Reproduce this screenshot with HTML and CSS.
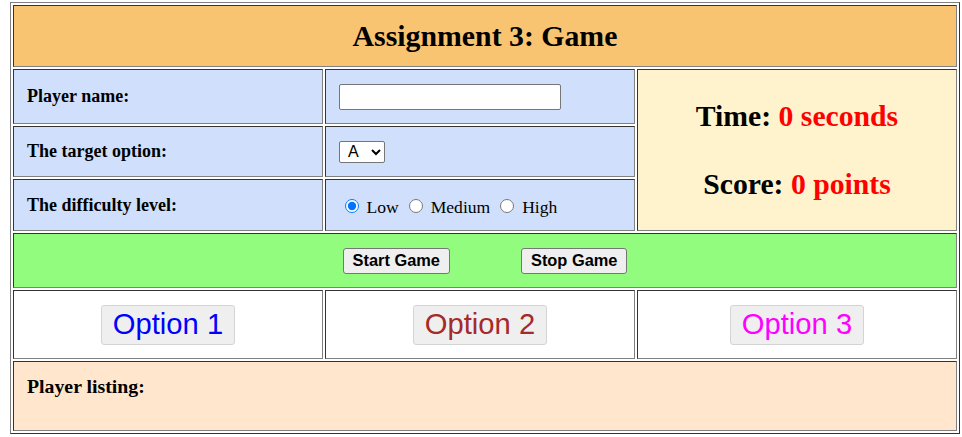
FILE: index.html
```html
<!DOCTYPE html>
<html lang="en">
<head>
<meta charset="utf-8">
<title>Assignment 3: Game</title>
<link rel="stylesheet" href="styles.css">
</head>
<body>
<div class="game">
  <div class="cell title">Assignment 3: Game</div>

  <div class="cell label">Player name:</div>
  <div class="cell field"><input class="name-input" type="text"></div>
  <div class="cell status">
    <div class="stat">Time: <span class="val">0 seconds</span></div>
    <div class="stat">Score: <span class="val">0 points</span></div>
  </div>

  <div class="cell label">The target option:</div>
  <div class="cell field">
    <select class="target">
      <option>A</option>
      <option>B</option>
      <option>C</option>
    </select>
  </div>

  <div class="cell label">The difficulty level:</div>
  <div class="cell field">
    <div class="levels"><input class="radio" type="radio" name="level" checked> Low <input class="radio" type="radio" name="level"> Medium <input class="radio" type="radio" name="level"> High</div>
  </div>

  <div class="cell controls">
    <button class="ctl">Start Game</button>
    <button class="ctl">Stop Game</button>
  </div>

  <div class="cell opt"><button class="option o1">Option 1</button></div>
  <div class="cell opt"><button class="option o2">Option 2</button></div>
  <div class="cell opt"><button class="option o3">Option 3</button></div>

  <div class="cell listing">Player listing:</div>
</div>
</body>
</html>
```

FILE: styles.css
```css
* {
  box-sizing: border-box;
}

body {
  margin: 0;
  background: #ffffff;
  font-family: "Liberation Serif", "Times New Roman", serif;
  font-size: 17.6px;
  color: #000000;
}

.game {
  margin: 2px 0 0 10px;
  width: 950px;
  display: grid;
  grid-template-columns: 310px 310px 320px;
  grid-template-rows: 62px 55px 51px 52px 55px 69px 70px;
  gap: 2px;
  padding: 2px;
  border: 1px solid;
  border-color: #808080 #333333 #333333 #808080;
}

.cell {
  border: 1px solid;
  border-color: #333333 #808080 #808080 #333333;
}

.title {
  grid-column: 1 / span 3;
  background: #f8c471;
  display: flex;
  align-items: center;
  justify-content: center;
  font-weight: bold;
  font-size: 29.8px;
}

.label {
  background: #d0e0fc;
  display: flex;
  align-items: center;
  padding-left: 13px;
  font-weight: bold;
  font-size: 18px;
}

.field {
  background: #d0e0fc;
  display: flex;
  align-items: center;
  padding-left: 13px;
}

.name-input {
  width: 222px;
  height: 26px;
  border: 1px solid #767676;
  border-radius: 2px;
  background: #ffffff;
  padding: 1px 3px;
  font: 16px "Liberation Sans", Arial, sans-serif;
}

.target {
  width: 46px;
  height: 22px;
  border: 1px solid #767676;
  border-radius: 2px;
  background: #ffffff;
  color: #000000;
  padding: 0 0 0 4px;
  font: 16px "Liberation Sans", Arial, sans-serif;
}

.levels {
  padding-top: 3px;
}

.radio {
  width: 14.3px;
  height: 14.3px;
  margin: 3.3px 3.3px 0 5.5px;
  vertical-align: baseline;
}

.status {
  grid-column: 3;
  grid-row: 2 / span 3;
  background: #fff3cd;
  display: flex;
  flex-direction: column;
  align-items: center;
  justify-content: center;
  gap: 34px;
  font-weight: bold;
  font-size: 29.7px;
  line-height: 34px;
}

.val {
  color: #ff0000;
}

.controls {
  grid-column: 1 / span 3;
  background: #91fc7e;
  display: flex;
  align-items: center;
  justify-content: center;
  gap: 71px;
}

.ctl {
  height: 26px;
  padding: 0 9px;
  border: 1px solid #767676;
  border-radius: 3px;
  background: #efefef;
  color: #000000;
  font: bold 16.4px "Liberation Sans", Arial, sans-serif;
}

.opt {
  background: #ffffff;
  display: flex;
  align-items: center;
  justify-content: center;
}

.option {
  height: 40px;
  padding: 0 10.4px;
  border: 1px solid #d4d4d4;
  border-radius: 3px;
  background: #efefef;
  font: 29.2px "Liberation Sans", Arial, sans-serif;
}

.o1 { color: #0000ff; }
.o2 { color: #a52a2a; }
.o3 { color: #ff00ff; }

.listing {
  grid-column: 1 / span 3;
  background: #ffe6cc;
  padding: 13px 13px 0;
  font-weight: bold;
  font-size: 19.8px;
}
```
